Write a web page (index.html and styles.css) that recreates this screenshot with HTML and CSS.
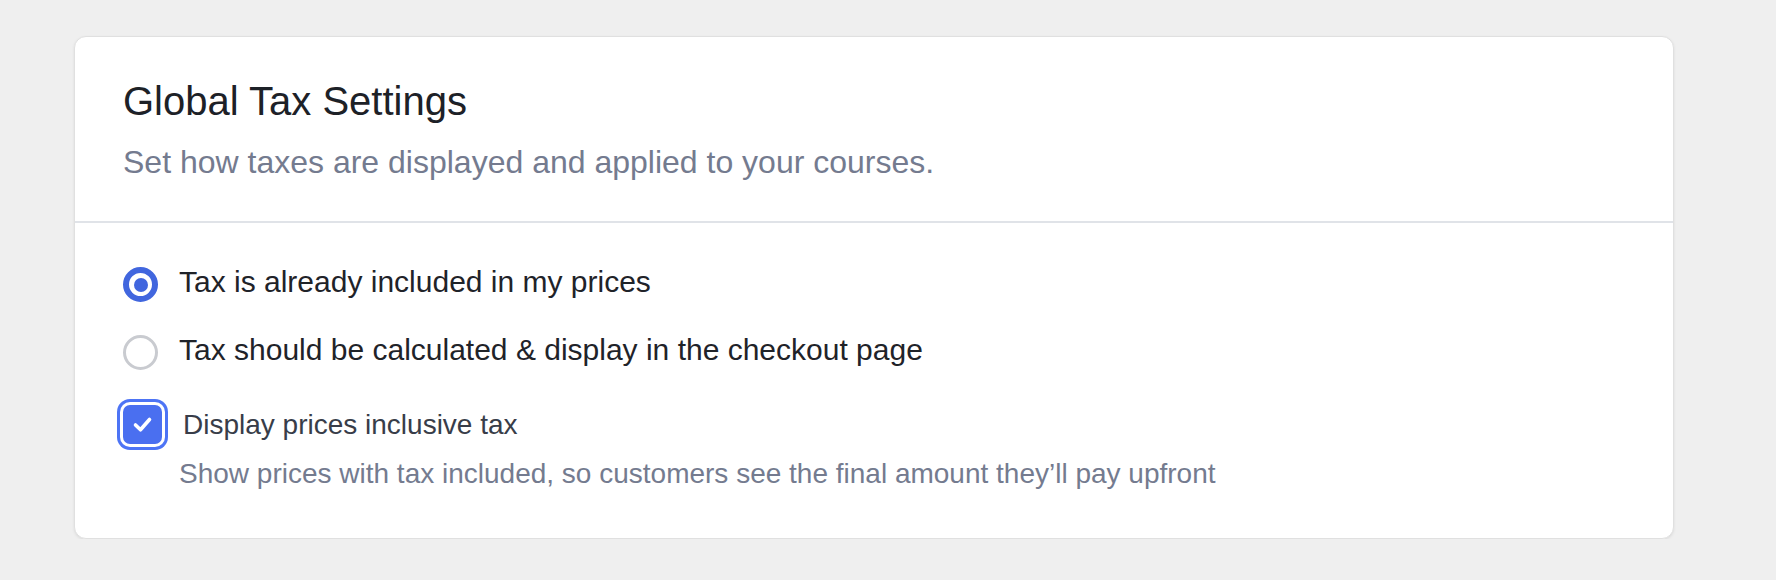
FILE: index.html
```html
<!DOCTYPE html>
<html lang="en">
<head>
<meta charset="utf-8">
<title>Global Tax Settings</title>
<link rel="stylesheet" href="styles.css">
</head>
<body>
<div class="page">
  <section class="card">
    <header class="card-header">
      <h1 class="title">Global Tax Settings</h1>
      <p class="subtitle">Set how taxes are displayed and applied to your courses.</p>
    </header>
    <div class="card-body">
      <div class="option">
        <span class="radio radio-on"><span class="dot"></span></span>
        <span class="option-text">Tax is already included in my prices</span>
      </div>
      <div class="option">
        <span class="radio"></span>
        <span class="option-text">Tax should be calculated &amp; display in the checkout page</span>
      </div>
      <div class="check-row">
        <span class="checkbox">
          <svg width="39" height="39" viewBox="0 0 39 39"><path d="M12.5 20 L17.5 24.8 L26.5 14.5" fill="none" stroke="#fff" stroke-width="3.6" stroke-linecap="round" stroke-linejoin="round"/></svg>
        </span>
        <span class="check-label">Display prices inclusive tax</span>
      </div>
      <p class="help">Show prices with tax included, so customers see the final amount they’ll pay upfront</p>
    </div>
  </section>
</div>
</body>
</html>
```
FILE: styles.css
```css
html, body {
  margin: 0;
  padding: 0;
  background: #efefef;
  font-family: "Liberation Sans", Arial, Helvetica, sans-serif;
}

.page {
  padding: 36px 102px 0 74px;
}

.card {
  background: #ffffff;
  border: 1px solid #e0e0e0;
  border-radius: 12px;
  box-shadow: 0 1px 3px rgba(0, 0, 0, 0.08);
}

.card-header {
  padding: 40px 48px 39px 48px;
  border-bottom: 2px solid #e0e3e8;
}

.title {
  margin: 0;
  font-size: 40px;
  line-height: 48px;
  font-weight: 400;
  color: #1d2127;
}

.subtitle {
  margin: 17px 0 0 0;
  font-size: 32px;
  line-height: 40px;
  color: #747b8f;
}

.card-body {
  padding: 41px 48px 47px 48px;
  display: flex;
  flex-direction: column;
  gap: 30px;
}

.option {
  display: flex;
  align-items: flex-start;
  gap: 21px;
}

.radio {
  flex: none;
  box-sizing: border-box;
  width: 35px;
  height: 35px;
  margin-top: 3px;
  border-radius: 50%;
  border: 3px solid #c9cbd0;
  display: flex;
  align-items: center;
  justify-content: center;
}

.radio-on {
  border: 6px solid #4166de;
}

.dot {
  width: 14px;
  height: 14px;
  border-radius: 50%;
  background: #4166de;
}

.option-text {
  font-size: 30px;
  line-height: 36px;
  color: #1f2329;
}

.check-row {
  display: flex;
  align-items: flex-start;
  gap: 21px;
  margin-top: 5px;
}

.checkbox {
  flex: none;
  width: 39px;
  height: 39px;
  border-radius: 7px;
  background: #4a6ff0;
  box-shadow: 0 0 0 3px #ffffff, 0 0 0 6px #4d74f5;
  display: flex;
}

.check-label {
  margin-top: 3px;
  font-size: 28px;
  line-height: 34px;
  color: #383d49;
}

.help {
  margin: -17px 0 0 56px;
  font-size: 28px;
  line-height: 34px;
  color: #747b8f;
}
```
